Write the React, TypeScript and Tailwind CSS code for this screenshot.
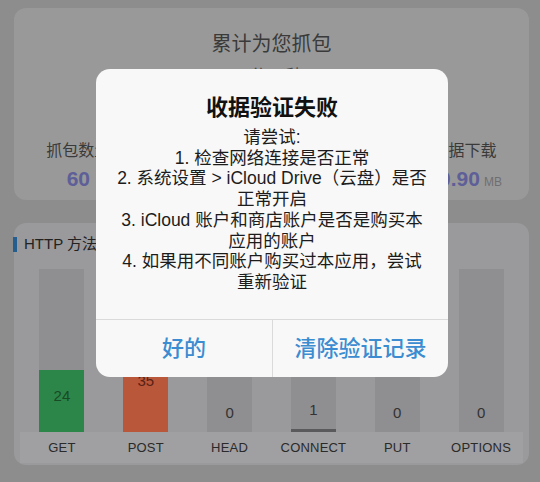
import React from 'react';

type Method = {
  name: string;
  count: number;
  fill?: string;
  text?: string;
};

const methods: Method[] = [
  { name: 'GET', count: 24, fill: 'bg-[#2d8649]', text: 'text-[#174a25]' },
  { name: 'POST', count: 35, fill: 'bg-[#b9573b]', text: 'text-[#5a2213]' },
  { name: 'HEAD', count: 0 },
  { name: 'CONNECT', count: 1, fill: 'bg-[#5a595b]' },
  { name: 'PUT', count: 0 },
  { name: 'OPTIONS', count: 0 },
];

// 中间两列被弹窗遮住
const stats = [
  { label: '抓包数量', value: '60', unit: '' },
  null,
  null,
  { label: '数据下载', value: '10.90', unit: 'MB' },
];

const tips = [
  '请尝试:',
  '1. 检查网络连接是否正常',
  '2. 系统设置 > iCloud Drive（云盘）是否',
  '正常开启',
  '3. iCloud 账户和商店账户是否是购买本',
  '应用的账户',
  '4. 如果用不同账户购买过本应用，尝试',
  '重新验证',
];

const font = { fontFamily: '"Liberation Sans", "Noto Sans CJK SC", sans-serif' };

const Bar: React.FC<{ m: Method }> = ({ m }) => {
  const h = Math.round(m.count * 2.6);
  const big = h > 30;
  return (
    <div className="flex flex-col items-center">
      <div className="flex h-[163px] w-[45px] flex-col justify-end bg-[#8f8e90]">
        {!big && (
          <div className="mb-[10px] text-center text-[15px] leading-[18px] text-[#333]">
            {m.count}
          </div>
        )}
        {big && (
          <div
            className={`flex items-center justify-center pb-[10px] text-[15px] ${m.fill} ${m.text ?? ''}`}
            style={{ height: h }}
          >
            {m.count}
          </div>
        )}
        {!big && h > 0 && <div className={m.fill} style={{ height: h }} />}
      </div>
    </div>
  );
};

const App: React.FC = () => {
  return (
    <div
      className="relative h-[482px] w-[540px] overflow-hidden bg-[#8d8d8d] pl-[14px] pr-[11px] pt-[8px]"
      style={font}
    >
      {/* 顶部统计卡片 */}
      <div className="flex h-[192px] flex-col items-center rounded-[12px] bg-[#999999] pt-[22px]">
        <div className="text-[20px] leading-[28px] text-[#3a3a3a]">累计为您抓包</div>
        <div className="mt-[7px] text-[17px] leading-[24px] text-[#4a4a4a]">3分36秒</div>
        <div className="mt-[51px] grid w-full grid-cols-4">
          {stats.map((s, i) =>
            s ? (
              <div key={i} className="flex flex-col items-center">
                <div className="text-[16px] leading-[22px] text-[#3a3a3a]">{s.label}</div>
                <div className="mt-[3px] flex items-baseline leading-[28px]">
                  <span className="text-[21px] font-bold text-[#5e5f98]">{s.value}</span>
                  {s.unit && <span className="ml-[4px] text-[12px] text-[#6f6f71]">{s.unit}</span>}
                </div>
              </div>
            ) : (
              <div key={i} />
            )
          )}
        </div>
      </div>

      {/* HTTP 方法统计 */}
      <div className="mt-[23px] h-[242px] rounded-[12px] bg-[#9a999b] pt-[10px]">
        <div className="flex h-[22px] items-center">
          <div className="-ml-[1px] h-[15px] w-[4px] bg-[#235e8f]" />
          <div className="ml-[7px] text-[15px] text-[#222]">HTTP 方法统计</div>
        </div>
        <div className="mt-[14px] px-[6px]">
          <div className="grid grid-cols-6">
            {methods.map((m) => (
              <Bar key={m.name} m={m} />
            ))}
          </div>
          <div className="grid h-[31px] grid-cols-6 items-center bg-[#a09fa1] text-[13px] tracking-[0.2px] text-[#2a2a2a]">
            {methods.map((m) => (
              <div key={m.name} className="text-center">
                {m.name}
              </div>
            ))}
          </div>
        </div>
      </div>

      {/* 弹窗 */}
      <div className="absolute left-[96px] top-[69px] flex h-[308px] w-[352px] flex-col overflow-hidden rounded-[14px] bg-[#f8f8f8]">
        <div className="pt-[25px] text-center text-[22px] font-bold leading-[28px] text-[#111]">
          收据验证失败
        </div>
        <div className="mt-[5px] text-center text-[17.5px] leading-[20.7px] text-[#1c1c1c]">
          {tips.map((t) => (
            <div key={t} className="whitespace-nowrap">
              {t}
            </div>
          ))}
        </div>
        <div className="mt-auto grid h-[58px] grid-cols-2 border-t border-[#dadada]">
          <button className="text-[22px] font-medium text-[#3b8cd0]">好的</button>
          <button className="border-l border-[#dadada] text-[22px] font-medium text-[#3b8cd0]">
            清除验证记录
          </button>
        </div>
      </div>
    </div>
  );
};

export default App;
